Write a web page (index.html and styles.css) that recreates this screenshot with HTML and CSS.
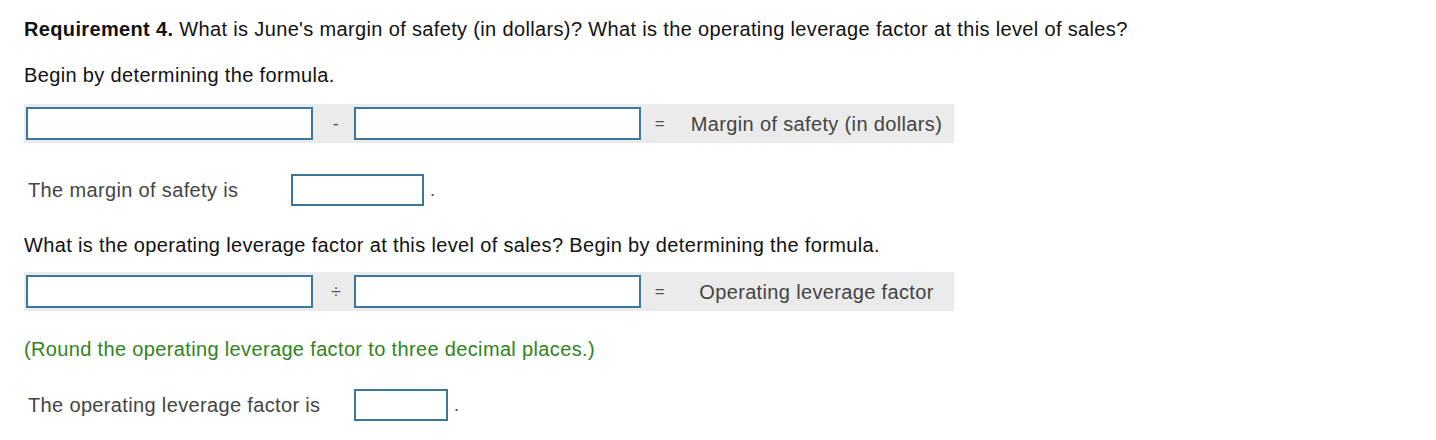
FILE: index.html
```html
<!DOCTYPE html>
<html lang="en">
<head>
<meta charset="utf-8">
<title>Requirement 4</title>
<link rel="stylesheet" href="styles.css">
</head>
<body>
<main class="page">
  <p class="req"><b>Requirement 4.</b> What is June's margin of safety (in dollars)? What is the operating leverage factor at this level of sales?</p>
  <p class="lead">Begin by determining the formula.</p>
  <div class="formula formula-1">
    <input class="box box-wide" type="text">
    <span class="op">-</span>
    <input class="box box-wide" type="text">
    <span class="eq">=</span>
    <span class="result">Margin of safety (in dollars)</span>
  </div>
  <div class="answer answer-1">
    <span class="answer-label">The margin of safety is</span>
    <input class="box box-md" type="text">
    <span class="dot">.</span>
  </div>
  <p class="question">What is the operating leverage factor at this level of sales? Begin by determining the formula.</p>
  <div class="formula formula-2">
    <input class="box box-wide" type="text">
    <span class="op">÷</span>
    <input class="box box-wide" type="text">
    <span class="eq">=</span>
    <span class="result">Operating leverage factor</span>
  </div>
  <p class="hint">(Round the operating leverage factor to three decimal places.)</p>
  <div class="answer answer-2">
    <span class="answer-label">The operating leverage factor is</span>
    <input class="box box-sm" type="text">
    <span class="dot">.</span>
  </div>
</main>
</body>
</html>
```

FILE: styles.css
```css
* { box-sizing: border-box; }
html, body { margin: 0; padding: 0; background: #fff; }
body {
  font-family: "Liberation Sans", Arial, Helvetica, sans-serif;
  font-size: 20px;
  letter-spacing: 0.35px;
  line-height: 22px;
  color: #111;
}
.page {
  padding: 18px 0 0 24px;
  display: flex;
  flex-direction: column;
  align-items: flex-start;
}
p { margin: 0; white-space: nowrap; }
.req b { font-weight: bold; }
.lead { margin-top: 24px; }
.formula {
  width: 930px;
  height: 39px;
  background: #ebebeb;
  display: flex;
  align-items: center;
  padding-left: 2px;
  color: #444;
}
.formula-1 { margin-top: 18px; }
.formula-2 { margin-top: 16px; }
.box {
  border: 2px solid #3a779c;
  background: #fff;
  height: 33px;
  padding: 0;
  margin: 0;
  font: inherit;
  outline: none;
  flex: none;
}
.box-wide { width: 287px; }
.box-md { width: 133px; height: 32px; }
.box-sm { width: 94px; height: 32px; }
.op {
  width: 41px;
  flex: none;
  padding-left: 5px;
  text-align: center;
  font-size: 18px;
  color: #555;
}
.eq {
  width: 38px;
  flex: none;
  text-align: center;
  font-size: 17px;
  color: #555;
}
.result {
  flex: 1;
  text-align: center;
  color: #444;
  white-space: nowrap;
}
.answer {
  display: flex;
  align-items: center;
  padding-left: 4px;
  color: #444;
}
.answer-1 { margin-top: 31px; }
.answer-2 { margin-top: 29px; }
.answer-label { white-space: nowrap; flex: none; }
.answer-1 .answer-label { width: 263px; }
.answer-2 .answer-label { width: 326px; }
.dot { margin-left: 6px; font-size: 18px; }
.question { margin-top: 28px; }
.hint { margin-top: 27px; color: #2f8320; }
```
